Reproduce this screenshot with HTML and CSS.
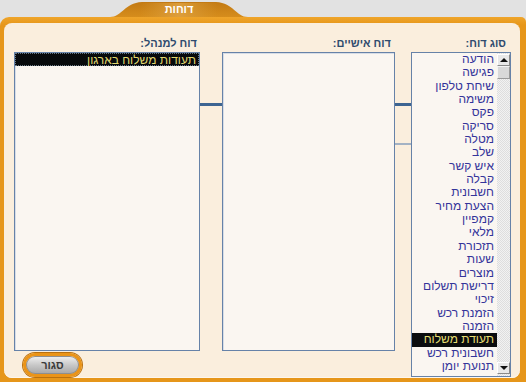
FILE: index.html
```html
<!DOCTYPE html>
<html lang="he">
<head>
<meta charset="utf-8">
<title>דוחות</title>
<link rel="stylesheet" href="styles.css">
</head>
<body>
<div class="tabrow">
  <div class="tab">
    <svg class="tab-shape" width="138" height="17" viewBox="0 0 138 17">
      <defs>
        <linearGradient id="tg" x1="0" y1="0" x2="0" y2="1">
          <stop offset="0" stop-color="#c27a14"/>
          <stop offset="1" stop-color="#d68d1c"/>
        </linearGradient>
        <linearGradient id="tl" x1="0" y1="0" x2="1" y2="0">
          <stop offset="0" stop-color="#d89a34" stop-opacity="0"/>
          <stop offset="0.5" stop-color="#dea040" stop-opacity="0.9"/>
          <stop offset="1" stop-color="#d89a34" stop-opacity="0"/>
        </linearGradient>
      </defs>
      <path d="M0,17 C12,17 14,3 32,2 L106,2 C124,3 126,17 138,17 Z" fill="url(#tg)"/>
      <rect x="30" y="3" width="78" height="14" fill="url(#tl)"/>
    </svg>
    <span class="tab-title">דוחות</span>
  </div>
</div>
<div class="frame">
  <div class="panel">
    <div class="col col-type">
      <div class="label">סוג דוח:</div>
      <div class="listbox">
        <ul class="items">
          <li>הודעה</li>
          <li>פגישה</li>
          <li>שיחת טלפון</li>
          <li>משימה</li>
          <li>פקס</li>
          <li>סריקה</li>
          <li>מטלה</li>
          <li>שלב</li>
          <li>איש קשר</li>
          <li>קבלה</li>
          <li>חשבונית</li>
          <li>הצעת מחיר</li>
          <li>קמפיין</li>
          <li>מלאי</li>
          <li>תזכורת</li>
          <li>שעות</li>
          <li>מוצרים</li>
          <li>דרישת תשלום</li>
          <li>זיכוי</li>
          <li>הזמנת רכש</li>
          <li>הזמנה</li>
          <li class="sel">תעודת משלוח</li>
          <li>חשבונית רכש</li>
          <li>תנועת יומן</li>
        </ul>
        <div class="scrollbar">
          <div class="sb-btn"><i class="arrow-up"></i></div>
          <div class="sb-thumb"></div>
          <div class="sb-track"></div>
          <div class="sb-btn sb-down"><i class="arrow-down"></i></div>
        </div>
      </div>
    </div>
    <div class="link link-right"><i class="bar"></i><i class="bar bar-light"></i></div>
    <div class="col col-personal">
      <div class="label">דוח אישיים:</div>
      <div class="box"></div>
    </div>
    <div class="link link-left"><i class="bar"></i></div>
    <div class="col col-manager">
      <div class="label">דוח למנהל:</div>
      <div class="box">
        <div class="row-sel">תעודות משלוח בארגון</div>
      </div>
      <button class="close-btn">סגור</button>
    </div>
  </div>
</div>
</body>
</html>
```

FILE: styles.css
```css
* { box-sizing: border-box; }
html, body { margin: 0; padding: 0; }
body {
  width: 526px;
  height: 382px;
  overflow: hidden;
  background: #e2e2e2;
  font-family: "Liberation Sans", "DejaVu Sans", sans-serif;
}
.tabrow {
  height: 17px;
  padding-left: 110px;
}
.tab {
  position: relative;
  width: 138px;
  height: 17px;
  display: flex;
  justify-content: center;
  align-items: center;
  padding-top: 2px;
}
.tab-shape {
  position: absolute;
  left: 0;
  top: 0;
}
.tab-title {
  position: relative;
  color: #fff;
  font-weight: bold;
  font-size: 11px;
  line-height: 13px;
}
.frame {
  height: 365px;
  background: linear-gradient(#efa52b, #e6961a 8px, #e6961a);
  border-radius: 9px 5px 0 0;
  padding: 6px 6px 4px 4px;
}
.panel {
  height: 355px;
  background: #faeedd;
  border-radius: 8px;
  display: flex;
  direction: rtl;
  padding: 0 9px 0 10px;
  overflow: hidden;
  box-shadow: inset 0 -1px 0 #fdf6ec;
}
.col {
  display: flex;
  flex-direction: column;
}
.col-type { width: 100px; }
.col-personal { width: 173px; }
.col-manager { width: 186px; }
.label {
  padding-top: 14px;
  height: 29px;
  font-size: 11px;
  line-height: 13px;
  font-weight: bold;
  color: #2f4b6e;
}
.col-type .label { padding-right: 5px; }
.col-personal .label { padding-right: 4px; }
.col-manager .label { padding-right: 3px; }

.box {
  height: 299px;
  background: #faf6f1;
  border: 1px solid #6682a8;
  box-shadow: inset 1px 1px 0 #d7dde6;
}
.listbox {
  height: 325px;
  background: #faf6f1;
  border: 1px solid #6682a8;
  display: flex;
  direction: ltr;
}
.items {
  list-style: none;
  margin: 0;
  padding: 0;
  flex: 1;
  direction: rtl;
  overflow: hidden;
}
.items li {
  height: 13.35px;
  line-height: 13.35px;
  font-size: 12px;
  padding-right: 3px;
  color: #34349a;
  white-space: nowrap;
}
.items li.sel {
  background: #0a0c0e;
  color: #e6df72;
}
.scrollbar {
  width: 13px;
  display: flex;
  flex-direction: column;
  padding-top: 1px;
  padding-bottom: 2px;
  background: repeating-conic-gradient(#f2f2f2 0 25%, #dedede 0 50%) 0 0 / 2px 2px;
}
.sb-btn {
  height: 12px;
  background: #e8e8e8;
  border: 1px solid;
  border-color: #ffffff #8a8a8a #8a8a8a #ffffff;
  display: flex;
  align-items: center;
  justify-content: center;
}
.sb-thumb {
  height: 13px;
  background: #d9d9d9;
  border: 1px solid;
  border-color: #f4f4f4 #9a9a9a #9a9a9a #f4f4f4;
}
.sb-track { flex: 1; }
.arrow-up {
  width: 0; height: 0;
  border-left: 4px solid transparent;
  border-right: 4px solid transparent;
  border-bottom: 4px solid #111;
}
.arrow-down {
  width: 0; height: 0;
  border-left: 4px solid transparent;
  border-right: 4px solid transparent;
  border-top: 4px solid #111;
}
.link { display: flex; flex-direction: column; }
.link-right { width: 16px; }
.link-left { width: 22px; }
.bar {
  display: block;
  height: 3px;
  margin-top: 80px;
  background: #3d6491;
}
.bar-light {
  height: 2px;
  margin-top: 37px;
  background: #a3b2c4;
}
.row-sel {
  height: 13px;
  line-height: 12px;
  font-size: 12px;
  padding-right: 2px;
  background: #070a0c;
  color: #e0d870;
  border: 1px dotted #6a7a88;
  white-space: nowrap;
}
.close-btn {
  margin-top: 2px;
  margin-left: 9px;
  align-self: flex-end;
  width: 59px;
  height: 24px;
  border-radius: 12px;
  border: 3px solid #ea9418;
  box-shadow: 0 0 0 1px #b9700e, inset 0 0 0 1px #8e8e8e;
  background: linear-gradient(#f2f2f2, #c8c8c8 50%, #a6a6a6);
  font-family: "Liberation Sans", "DejaVu Sans", sans-serif;
  font-size: 11px;
  font-weight: bold;
  color: #3a3a3a;
  padding: 0;
  direction: rtl;
}
```
